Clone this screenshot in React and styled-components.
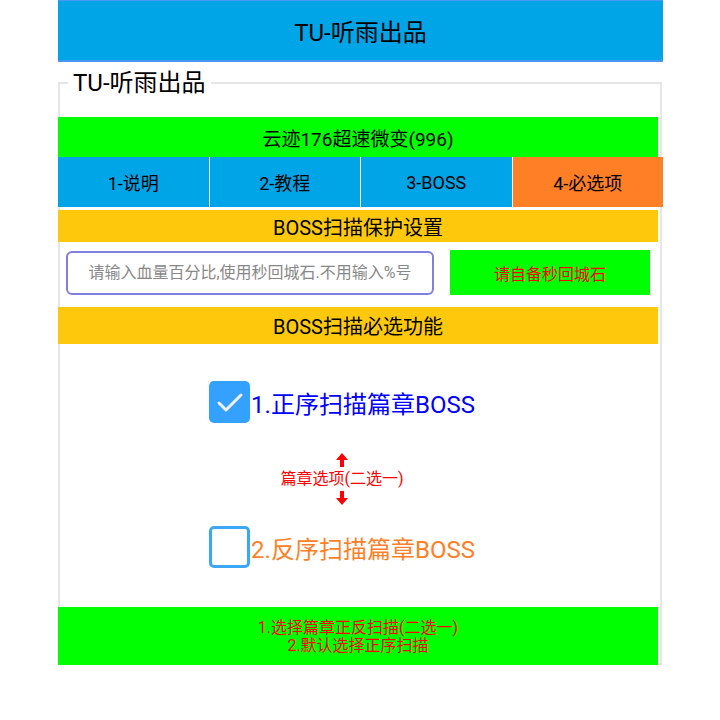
import React from "react";
import styled, { createGlobalStyle } from "styled-components";

const Global = createGlobalStyle`
  html, body { margin: 0; padding: 0; background: #fff; }
  body { font-family: Roboto, "Noto Sans CJK SC", sans-serif; }
`;

const Page = styled.div`
  width: 605px;
  margin: 0 auto;
  padding-left: 1px;
`;

const Header = styled.div`
  height: 59px;
  border-top: 1px solid #4a95f5;
  border-bottom: 2px solid #4a95f5;
  background: #00a5e8;
  display: flex;
  align-items: center;
  justify-content: center;
  font-size: 24px;
  color: #000;
`;

const Box = styled.fieldset`
  margin: 8px 0 0 0;
  padding: 0;
  width: 600px;
  border: 2px solid #e6e6e6;
  min-width: 0;
`;

const Legend = styled.legend`
  margin-left: 8px;
  padding: 0 5px;
  font-size: 24px;
  line-height: 26px;
  color: #000;
`;

const Inner = styled.div`
  margin-left: -2px;
  margin-top: 21px;
  margin-bottom: -4px;
  display: flex;
  flex-direction: column;
`;

const Bar = styled.div`
  flex-shrink: 0;
  box-sizing: border-box;
  width: 600px;
  height: ${(p) => p.$h}px;
  background: ${(p) => p.$bg};
  color: ${(p) => p.$color || "#000"};
  font-size: ${(p) => p.$fs || 20}px;
  margin-top: ${(p) => p.$mt || 0}px;
  display: flex;
  flex-direction: column;
  align-items: center;
  justify-content: center;
  line-height: ${(p) => p.$lh || "normal"};
  text-align: center;
`;

const Tabs = styled.div`
  width: 605px;
  height: 50px;
  display: grid;
  grid-template-columns: repeat(4, 1fr);
  gap: 1px;
  background: #fff;
`;

const Tab = styled.div`
  background: ${(p) => (p.$active ? "#ff7f27" : "#00a5e8")};
  display: flex;
  align-items: center;
  justify-content: center;
  font-size: 18px;
  color: #000;
`;

const InputRow = styled.div`
  display: flex;
  align-items: center;
  margin-top: 8px;
  padding-left: 8px;
  gap: 16px;
`;

const Input = styled.input`
  box-sizing: border-box;
  width: 368px;
  height: 44px;
  border: 2px solid #7f7fdf;
  border-radius: 6px;
  text-align: center;
  font-family: Roboto, "Noto Sans CJK SC", sans-serif;
  font-size: 16px;
  outline: none;
  &::placeholder { color: #888; }
`;

const Btn = styled.div`
  width: 200px;
  height: 45px;
  background: #00ff00;
  color: #ff0000;
  font-size: 16px;
  display: flex;
  align-items: center;
  justify-content: center;
`;

const Options = styled.div`
  width: 600px;
  display: flex;
  flex-direction: column;
  align-items: center;
  padding-right: 32px;
  box-sizing: border-box;
`;

const OptionRow = styled.div`
  display: flex;
  align-items: center;
  margin-top: ${(p) => p.$mt}px;
  gap: 1px;
`;

const Check = styled.div`
  box-sizing: border-box;
  width: 41px;
  height: 42px;
  border-radius: 5px;
  background: ${(p) => (p.$on ? "#33a1fd" : "#fff")};
  border: ${(p) => (p.$on ? "none" : "3px solid #3ca6f7")};
  display: flex;
  align-items: center;
  justify-content: center;
`;

const Label = styled.span`
  font-size: 24px;
  color: ${(p) => p.$color};
`;

const Hint = styled.div`
  margin-top: 30px;
  display: flex;
  flex-direction: column;
  align-items: center;
  color: #ff0000;
  font-size: 16px;
  line-height: 24px;
`;

const Arrow = ({ down }) => (
  <svg width="12" height="14" viewBox="0 0 12 14" style={down ? { transform: "rotate(180deg)" } : undefined}>
    <polygon points="6,0 12,7 8,7 8,14 4,14 4,7 0,7" fill="#ff0000" />
  </svg>
);

export default function App() {
  return (
    <Page>
      <Global />
      <Header>TU-听雨出品</Header>
      <Box>
        <Legend>TU-听雨出品</Legend>
        <Inner>
          <Bar $h={40} $bg="#00ff00" $fs={19}>云迹176超速微变(996)</Bar>
          <Tabs>
            <Tab>1-说明</Tab>
            <Tab>2-教程</Tab>
            <Tab>3-BOSS</Tab>
            <Tab $active>4-必选项</Tab>
          </Tabs>
          <Bar $h={32} $bg="#fec90d" $mt={3}>BOSS扫描保护设置</Bar>
          <InputRow>
            <Input placeholder="请输入血量百分比,使用秒回城石.不用输入%号" />
            <Btn>请自备秒回城石</Btn>
          </InputRow>
          <Bar $h={37} $bg="#fec90d" $mt={12}>BOSS扫描必选功能</Bar>
          <Options>
            <OptionRow $mt={37}>
              <Check $on>
                <svg width="28" height="22" viewBox="0 0 28 22">
                  <polyline points="3,12 10,19 25,4" fill="none" stroke="#f0f0f0" strokeWidth="3" strokeLinecap="round" strokeLinejoin="round" />
                </svg>
              </Check>
              <Label $color="#0000ff">1.正序扫描篇章BOSS</Label>
            </OptionRow>
            <Hint>
              <Arrow />
              <span>篇章选项(二选一)</span>
              <Arrow down />
            </Hint>
            <OptionRow $mt={21}>
              <Check />
              <Label $color="#ff7f27">2.反序扫描篇章BOSS</Label>
            </OptionRow>
          </Options>
          <Bar $h={60} $bg="#00ff00" $mt={39} $color="#ff0000" $fs={16} $lh="18px">
            <span>1.选择篇章正反扫描(二选一)</span>
            <span>2.默认选择正序扫描</span>
          </Bar>
        </Inner>
      </Box>
    </Page>
  );
}
